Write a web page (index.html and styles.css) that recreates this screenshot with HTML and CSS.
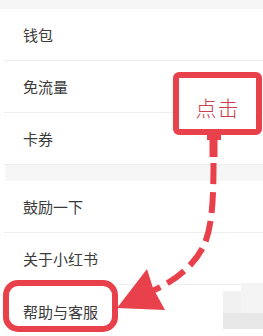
FILE: index.html
```html
<!DOCTYPE html>
<html lang="zh">
<head>
<meta charset="utf-8">
<link rel="stylesheet" href="styles.css">
</head>
<body>
<div class="page">
  <div class="gap gap-top"></div>
  <div class="group">
    <div class="row">钱包</div>
    <div class="row">免流量</div>
    <div class="row">卡券</div>
  </div>
  <div class="gap gap-mid"></div>
  <div class="group">
    <div class="row">鼓励一下</div>
    <div class="row">关于小红书</div>
    <div class="row row-last">帮助与客服</div>
  </div>

  <div class="watermark">
    <div class="wm-a"></div>
    <div class="wm-b"></div>
    <div class="wm-c"></div>
  </div>

  <svg class="arrow" width="263" height="336" viewBox="0 0 263 336">
    <rect x="207" y="134" width="14" height="6" fill="#e9414b"/>
    <rect x="209.5" y="138" width="8" height="19" fill="#e9414b"/>
    <path d="M213.5,163 C213.5,200 212,225 205,243 C197,262 178,280 152,291" fill="none" stroke="#e9414b" stroke-width="6" stroke-dasharray="21 8"/>
    <polygon points="117,308 147,269 153,288 165,310" fill="#e9414b"/>
  </svg>

  <div class="callout">点击</div>
  <div class="highlight"></div>
</div>
</body>
</html>
```

FILE: styles.css
```css
html, body {
  margin: 0;
  padding: 0;
  background: #ffffff;
}
.page {
  position: relative;
  width: 263px;
  height: 336px;
  overflow: hidden;
  font-family: "Noto Sans CJK SC", "Noto Sans", sans-serif;
}
.gap {
  background: #f6f6f6;
}
.gap-top {
  height: 9px;
}
.gap-mid {
  height: 16px;
  margin-left: 5px;
}
.group {
  display: flex;
  flex-direction: column;
}
.row {
  box-sizing: border-box;
  height: 52px;
  display: flex;
  align-items: center;
  font-size: 15px;
  font-weight: 400;
  color: #3a3a3a;
  border-bottom: 1px solid #eeeeee;
  margin-left: 4px;
  padding-left: 19px;
}
.row-last {
  border-bottom: none;
}
.arrow {
  position: absolute;
  left: 0;
  top: 0;
}
.callout {
  position: absolute;
  left: 173px;
  top: 72px;
  width: 89px;
  height: 63px;
  box-sizing: border-box;
  border: 6px solid #e9414b;
  border-radius: 6px;
  background: #ffffff;
  display: flex;
  align-items: center;
  justify-content: center;
  padding-top: 6px;
  font-size: 21px;
  font-weight: 300;
  color: #c9404d;
  letter-spacing: 1px;
}
.highlight {
  position: absolute;
  left: 3px;
  top: 280px;
  width: 115px;
  height: 52px;
  box-sizing: border-box;
  border: 6px solid #e9414b;
  border-radius: 15px;
}
.watermark {
  position: absolute;
  left: 223px;
  top: 283px;
  width: 40px;
  height: 48px;
}
.wm-a {
  position: absolute;
  left: 0;
  top: 8px;
  width: 18px;
  height: 38px;
  background: #f1f1f1;
}
.wm-b {
  position: absolute;
  left: 18px;
  top: 0;
  width: 22px;
  height: 46px;
  background: #f4f4f4;
}
.wm-c {
  position: absolute;
  left: 0;
  top: 30px;
  width: 40px;
  height: 16px;
  background: #e7e7e7;
}
```
